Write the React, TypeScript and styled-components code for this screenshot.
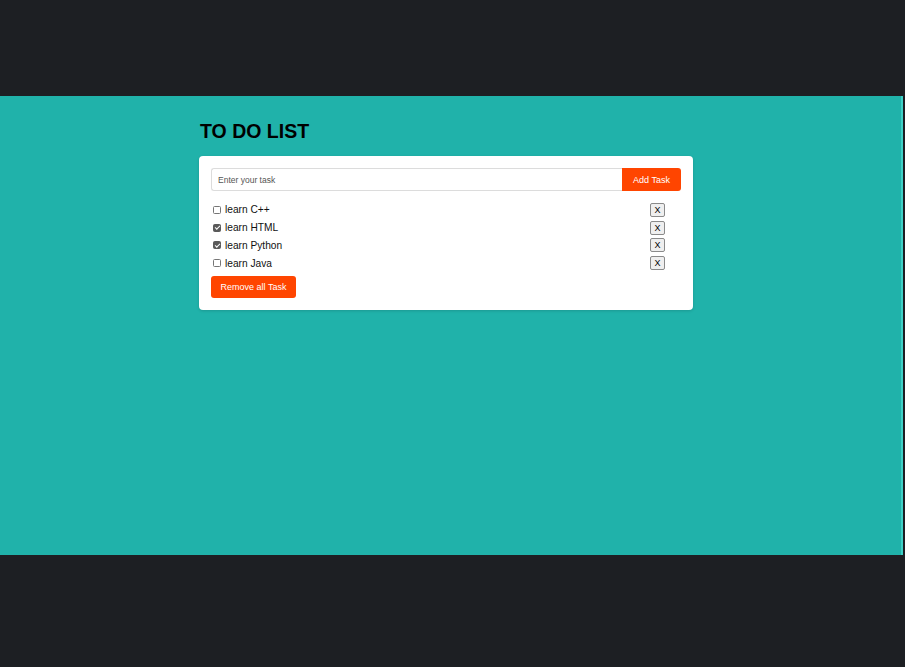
import React, { useState } from "react";
import styled, { createGlobalStyle } from "styled-components";

const GlobalStyle = createGlobalStyle`
  html, body { margin: 0; padding: 0; }
  body {
    background: #1d1f23;
    font-family: "Liberation Sans", Arial, sans-serif;
  }
`;

const Page = styled.div`
  display: flex;
  flex-direction: column;
  min-height: 667px;
`;

const Band = styled.div<{ $h: number }>`
  height: ${(p) => p.$h}px;
  background: #1d1f23;
`;

const Main = styled.main`
  height: 459px;
  width: 903px;
  background: #20b2aa;
  border-right: 2px solid #3fd0c6;
  box-sizing: border-box;
  padding: 22px 0 0 199px;
`;

const Title = styled.h1`
  margin: 0 0 12px 1px;
  font-size: 19.5px;
  line-height: 26px;
  font-weight: 700;
  color: #000;
`;

const Card = styled.div`
  width: 494px;
  box-sizing: border-box;
  background: #fff;
  border-radius: 4px;
  padding: 12px 12px 12px 12px;
  box-shadow: 0 1px 3px rgba(0, 0, 0, 0.15);
`;

const InputRow = styled.div`
  display: flex;
  height: 23px;
  margin-bottom: 10px;
`;

const TaskInput = styled.input`
  flex: 1;
  min-width: 0;
  box-sizing: border-box;
  height: 23px;
  border: 1px solid #dcdcdc;
  border-right: none;
  border-radius: 3px 0 0 3px;
  padding: 0 6px;
  font-family: "Liberation Sans", Arial, sans-serif;
  font-size: 8.5px;
  color: #333;
  outline: none;
  &::placeholder { color: #555; }
`;

const OrangeButton = styled.button<{ $w: number; $h: number; $radius: string }>`
  width: ${(p) => p.$w}px;
  height: ${(p) => p.$h}px;
  background: #ff4500;
  color: #fff;
  border: none;
  border-radius: ${(p) => p.$radius};
  font-family: "Liberation Sans", Arial, sans-serif;
  font-size: 9px;
  padding: 0;
  cursor: pointer;
`;

const List = styled.ul`
  list-style: none;
  margin: 0;
  padding: 0 0 0 2px;
  display: flex;
  flex-direction: column;
`;

const Row = styled.li`
  display: flex;
  align-items: center;
  height: 17.8px;
  padding-right: 16px;
`;

const Check = styled.input`
  appearance: none;
  width: 8px;
  height: 8px;
  margin: 0 4px 0 0;
  box-sizing: border-box;
  border: 1px solid #767676;
  border-radius: 1.5px;
  background: #fff;
  display: grid;
  place-content: center;
  &:checked {
    background: #5a5a5a;
    border-color: #5a5a5a;
  }
  &:checked::after {
    content: "";
    width: 2px;
    height: 4px;
    border: solid #fff;
    border-width: 0 1.2px 1.2px 0;
    transform: translate(0, -0.5px) rotate(45deg);
  }
`;

const Label = styled.span`
  flex: 1;
  font-size: 10.2px;
  color: #111;
`;

const XButton = styled.button`
  width: 15px;
  height: 14px;
  padding: 0;
  box-sizing: border-box;
  background: #efefef;
  border: 1px solid #8a8a8a;
  border-radius: 2px;
  font-family: "Liberation Sans", Arial, sans-serif;
  font-size: 9px;
  color: #000;
  line-height: 12px;
`;

const Footer = styled.div`
  margin-top: 4px;
`;

const initial = [
  { text: "learn C++", done: false },
  { text: "learn HTML", done: true },
  { text: "learn Python", done: true },
  { text: "learn Java", done: false },
];

export default function App() {
  const [tasks, setTasks] = useState(initial);
  const [value, setValue] = useState("");
  return (
    <>
      <GlobalStyle />
      <Page>
        <Band $h={96} />
        <Main>
          <Title>TO DO LIST</Title>
          <Card>
            <InputRow>
              <TaskInput
                placeholder="Enter your task"
                value={value}
                onChange={(e) => setValue(e.target.value)}
              />
              <OrangeButton
                $w={59}
                $h={23}
                $radius="0 3px 3px 0"
                onClick={() => {
                  if (value.trim()) {
                    setTasks([...tasks, { text: value, done: false }]);
                    setValue("");
                  }
                }}
              >
                Add Task
              </OrangeButton>
            </InputRow>
            <List>
              {tasks.map((t, i) => (
                <Row key={i}>
                  <Check
                    type="checkbox"
                    checked={t.done}
                    onChange={() =>
                      setTasks(tasks.map((x, j) => (j === i ? { ...x, done: !x.done } : x)))
                    }
                  />
                  <Label>{t.text}</Label>
                  <XButton onClick={() => setTasks(tasks.filter((_, j) => j !== i))}>X</XButton>
                </Row>
              ))}
            </List>
            <Footer>
              <OrangeButton $w={85} $h={22} $radius="3px" onClick={() => setTasks([])}>
                Remove all Task
              </OrangeButton>
            </Footer>
          </Card>
        </Main>
        <Band $h={112} />
      </Page>
    </>
  );
}
